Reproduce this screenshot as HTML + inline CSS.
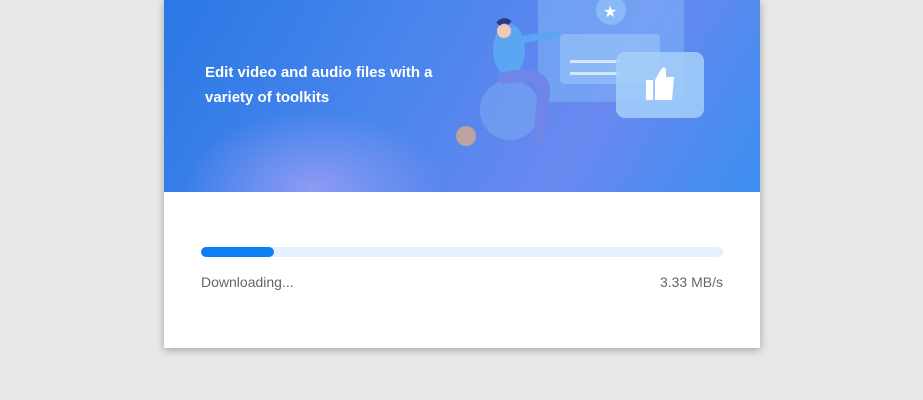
<!DOCTYPE html>
<html><head><style>
body{margin:0;width:923px;height:400px;background:#e8e8e8;overflow:hidden;font-family:"Liberation Sans",sans-serif;position:relative}
.card{position:absolute;left:164px;top:0;width:596px;height:348px;background:#fff;box-shadow:0 2px 8px rgba(0,0,0,.3)}
.ban{position:absolute;left:0;top:0;width:596px;height:192px;overflow:hidden;
background:linear-gradient(120deg,#2a78e6 0%,#4a86ec 40%,#6a88f0 70%,#3b8ff0 100%)}
.g1{position:absolute;left:20px;top:110px;width:260px;height:160px;border-radius:50%;background:radial-gradient(rgba(160,160,245,.8) 0%,rgba(150,160,245,0) 70%)}
.t{position:absolute;left:41px;top:60px;color:#fff;font-size:15px;line-height:25px;font-weight:bold}
.bar{position:absolute;left:37px;top:247px;width:522px;height:10px;border-radius:5px;background:#e3f0fd}
.fill{width:73px;height:10px;border-radius:5px;background:#0d7ff5}
.l{position:absolute;top:274px;font-size:14px;color:#666}
</style></head><body>
<div class="card">
<div class="ban">
<div class="g1"></div>
<div class="t">Edit video and audio files with a<br>variety of toolkits</div>
<svg width="596" height="192" style="position:absolute;left:0;top:0">
<rect x="374" y="-10" width="146" height="112" rx="10" fill="#7fb4f5" opacity=".55"/>
<circle cx="447" cy="10" r="15" fill="#8cc0f7" opacity=".8"/>
<text x="439" y="17" fill="#fff" font-size="16">★</text>
<rect x="396" y="34" width="100" height="50" rx="4" fill="#9cc6f8" opacity=".6"/>
<rect x="406" y="60" width="50" height="3" fill="#d5e7fc"/><rect x="406" y="72" width="50" height="3" fill="#d5e7fc"/>
<rect x="452" y="52" width="88" height="66" rx="9" fill="#a5cff9" opacity=".85"/>
<rect x="482" y="80" width="7" height="20" fill="#fff"/><path d="M491 100 V80 L498 68 Q502 66 502 72 V77 H510 L508 100 Z" fill="#fff"/>
<circle cx="346" cy="110" r="30" fill="#7aa6f0" opacity=".6"/>
<circle cx="302" cy="136" r="10" fill="#d6a98d" opacity=".8"/>
<ellipse cx="345" cy="50" rx="16" ry="26" fill="#5aa6f3"/>
<path d="M355 40 L392 34" stroke="#5aa6f3" stroke-width="7" stroke-linecap="round"/>
<circle cx="340" cy="31" r="7" fill="#f1c9b5"/>
<path d="M334 24 q6 -6 12 -1" stroke="#2b3a7e" stroke-width="5" fill="none"/>
<path d="M340 78 Q380 70 380 90 L375 140" stroke="#6f86e8" stroke-width="12" fill="none" stroke-linecap="round"/>
</svg>
</div>
<div class="bar"><div class="fill"></div></div>
<div class="l" style="left:37px">Downloading...</div>
<div class="l" style="right:37px">3.33 MB/s</div>
</div>
</body></html>
